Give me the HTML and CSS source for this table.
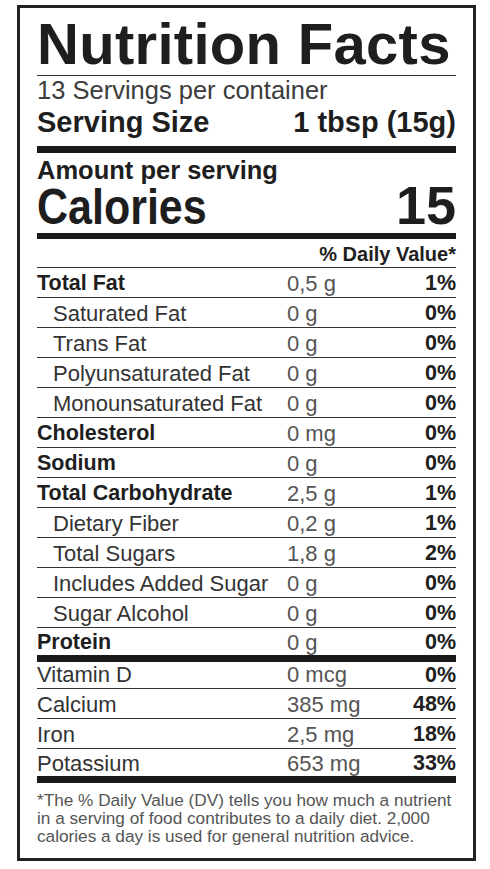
FILE: index.html
```html
<!DOCTYPE html>
<html lang="en">
<head>
<meta charset="utf-8">
<title>Nutrition Facts</title>
<link rel="stylesheet" href="styles.css">
</head>
<body>
<div class="label">
  <h1 class="title">Nutrition Facts</h1>
  <div class="servings">13 Servings per container</div>
  <div class="serving-size"><span>Serving Size</span><span>1 tbsp (15g)</span></div>
  <div class="amount-per">Amount per serving</div>
  <div class="calories"><span class="cal-label">Calories</span><span class="cal-value">15</span></div>
  <div class="dv-head">% Daily Value*</div>

  <div class="row"><span class="name b">Total Fat</span><span class="amt">0,5 g</span><span class="pct">1%</span></div>
  <div class="row"><span class="name indent">Saturated Fat</span><span class="amt">0 g</span><span class="pct">0%</span></div>
  <div class="row"><span class="name indent">Trans Fat</span><span class="amt">0 g</span><span class="pct">0%</span></div>
  <div class="row"><span class="name indent">Polyunsaturated Fat</span><span class="amt">0 g</span><span class="pct">0%</span></div>
  <div class="row"><span class="name indent">Monounsaturated Fat</span><span class="amt">0 g</span><span class="pct">0%</span></div>
  <div class="row"><span class="name b">Cholesterol</span><span class="amt">0 mg</span><span class="pct">0%</span></div>
  <div class="row"><span class="name b">Sodium</span><span class="amt">0 g</span><span class="pct">0%</span></div>
  <div class="row"><span class="name b">Total Carbohydrate</span><span class="amt">2,5 g</span><span class="pct">1%</span></div>
  <div class="row"><span class="name indent">Dietary Fiber</span><span class="amt">0,2 g</span><span class="pct">1%</span></div>
  <div class="row"><span class="name indent">Total Sugars</span><span class="amt">1,8 g</span><span class="pct">2%</span></div>
  <div class="row"><span class="name indent">Includes Added Sugar</span><span class="amt">0 g</span><span class="pct">0%</span></div>
  <div class="row"><span class="name indent">Sugar Alcohol</span><span class="amt">0 g</span><span class="pct">0%</span></div>
  <div class="row protein"><span class="name b">Protein</span><span class="amt">0 g</span><span class="pct">0%</span></div>

  <div class="row vitd"><span class="name">Vitamin D</span><span class="amt">0 mcg</span><span class="pct">0%</span></div>
  <div class="row"><span class="name">Calcium</span><span class="amt">385 mg</span><span class="pct">48%</span></div>
  <div class="row"><span class="name">Iron</span><span class="amt">2,5 mg</span><span class="pct">18%</span></div>
  <div class="row last"><span class="name">Potassium</span><span class="amt">653 mg</span><span class="pct">33%</span></div>

  <p class="foot">*The % Daily Value (DV) tells you how much a nutrient<br>in a serving of food contributes to a daily diet. 2,000<br>calories a day is used for general nutrition advice.</p>
</div>
</body>
</html>
```

FILE: styles.css
```css
body {
  margin: 0;
  background: #fff;
  font-family: "Liberation Sans", Arial, sans-serif;
}

.label {
  box-sizing: border-box;
  width: 459px;
  margin: 5px 0 0 17px;
  border: 3px solid #222;
  padding: 4px 17px 13px;
  color: #1e1e1e;
}

.title {
  margin: 0;
  font-size: 58px;
  line-height: 63px;
  font-weight: 700;
  letter-spacing: 0.3px;
  border-bottom: 1px solid #333;
}

.servings {
  font-size: 25.5px;
  line-height: 26px;
  color: #3c3c3c;
  margin-top: 1px;
}

.serving-size {
  display: flex;
  justify-content: space-between;
  font-size: 29px;
  line-height: 30px;
  font-weight: 700;
  margin-top: 4px;
  padding-bottom: 9px;
  border-bottom: 7px solid #1a1a1a;
}

.amount-per {
  font-size: 25.5px;
  line-height: 26px;
  font-weight: 700;
  margin-top: 4px;
}

.calories {
  display: flex;
  justify-content: space-between;
  align-items: baseline;
  font-weight: 700;
  padding-bottom: 6px;
  border-bottom: 6px solid #1a1a1a;
}

.cal-label {
  display: inline-block;
  font-size: 50px;
  line-height: 40px;
  transform: scaleX(0.86);
  transform-origin: left center;
}

.cal-value {
  font-size: 54px;
  line-height: 44px;
}

.dv-head {
  text-align: right;
  font-size: 20px;
  line-height: 24px;
  font-weight: 700;
  padding-top: 3px;
  padding-bottom: 1px;
  border-bottom: 1px solid #333;
}

.row {
  display: grid;
  grid-template-columns: 250px 1fr auto;
  font-size: 22px;
  line-height: 29px;
  color: #333;
  border-bottom: 1px solid #333;
}

.row > span {
  position: relative;
  top: 1px;
}

.name.indent {
  padding-left: 16px;
}

.name.b {
  font-size: 21.5px;
  font-weight: 700;
  color: #1e1e1e;
}

.amt {
  color: #555;
}

.pct {
  font-size: 21.5px;
  font-weight: 700;
  color: #1e1e1e;
  text-align: right;
}

.row.protein {
  line-height: 27px;
  border-bottom: 7px solid #1a1a1a;
}

.row.vitd {
  line-height: 24px;
  padding-bottom: 2px;
}

.row.last {
  line-height: 27px;
  border-bottom: 7px solid #1a1a1a;
}

.foot {
  margin: 0;
  padding-top: 8px;
  font-size: 17.2px;
  line-height: 18px;
  color: #555;
  white-space: nowrap;
}
```
